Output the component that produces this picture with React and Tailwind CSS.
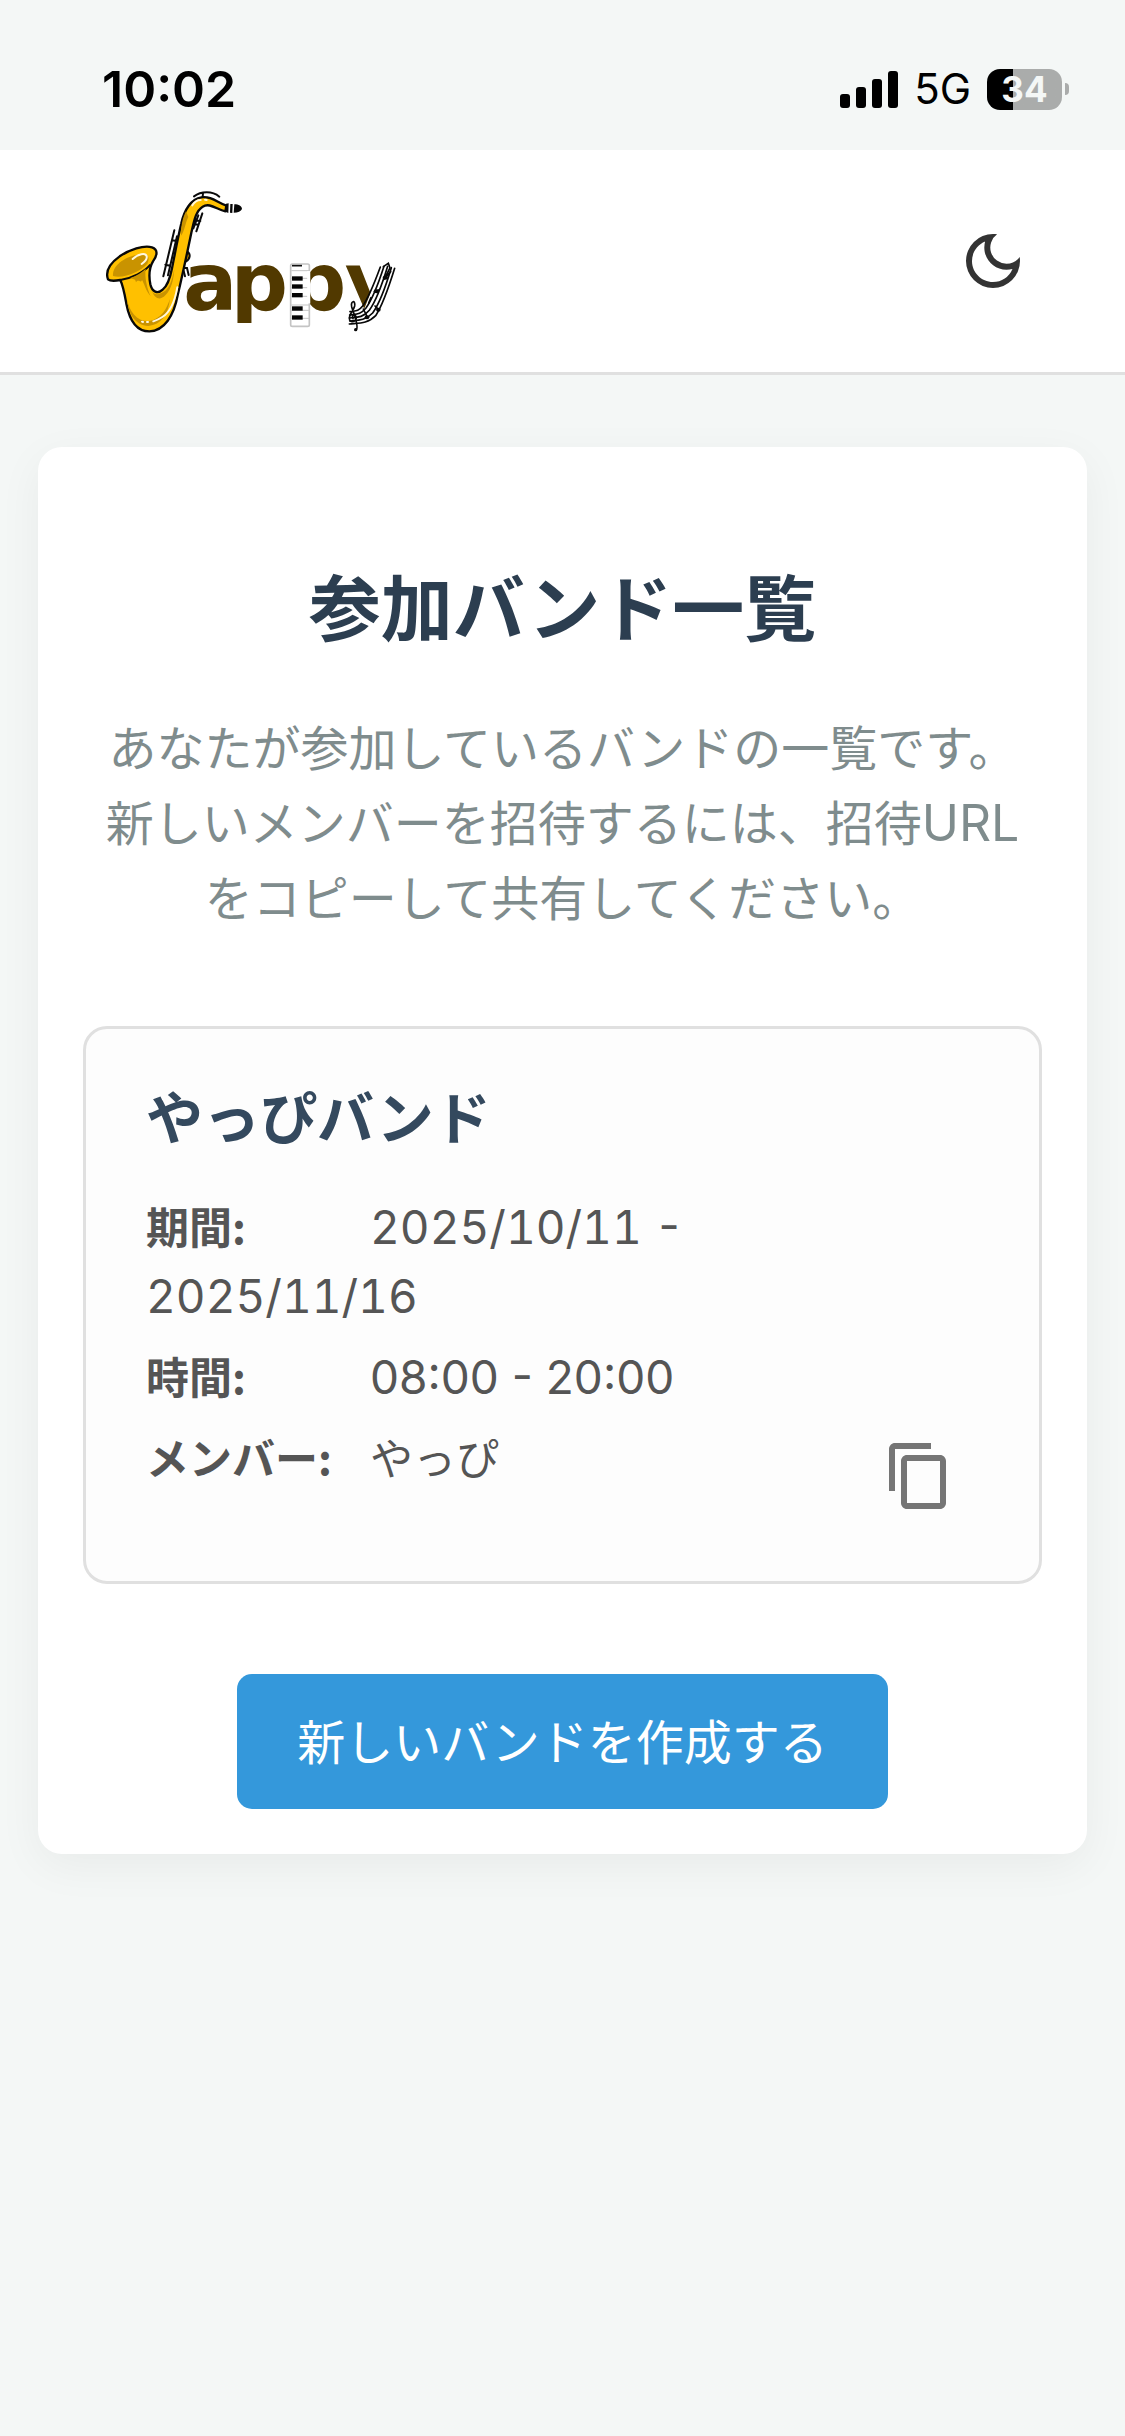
import React from "react";
import { MdContentCopy, MdOutlineDarkMode } from "react-icons/md";

const PIANO_KEYS = [316, 340, 366, 406, 433];

function StatusBar() {
  return (
    <div className="flex h-[150px] items-center justify-between pt-7 pr-14 pl-[102px] text-black">
      <time className="text-[50px] leading-[60px] font-semibold">10:02</time>
      <div className="flex items-center gap-4">
        <svg className="h-[37px] w-[58px]" viewBox="0 0 58 37" aria-hidden="true">
          <rect x="0" y="23" width="10" height="14" rx="3" />
          <rect x="16" y="16" width="10" height="21" rx="3" />
          <rect x="32" y="8" width="10" height="29" rx="3" />
          <rect x="48" y="0" width="10" height="37" rx="3" />
        </svg>
        <span className="text-[42px] leading-[48px]">5G</span>
        <div className="flex items-center gap-[3px]">
          <div className="flex h-[41px] w-[75px] items-center justify-center rounded-[13px] bg-linear-to-r from-black from-35% to-[#aaacab] to-35% text-[35px] leading-none font-bold text-[#f4f7f6]">
            34
          </div>
          <div className="h-3 w-1 rounded-r-full bg-[#aaacab]" />
        </div>
      </div>
    </div>
  );
}

function Logo() {
  return (
    <svg className="h-[180px] w-[340px]" viewBox="0 0 1020 540" role="img" aria-label="Jappy">
      <g fontFamily="DejaVu Sans, sans-serif" fontWeight="700" fontSize="240" fill="#513900">
        <text x="310" y="417">a</text>
        <text x="452" y="417">p</text>
        <text x="627" y="417">p</text>
        <text x="794" y="417">y</text>
      </g>
      <path d="M628 262H690V484H628ZM440 456H627V500H440ZM905 270L960 270L960 500H780L800 440L850 420L868 375Z" fill="#fff" />

      <rect x="632" y="279" width="56" height="187" rx="5" fill="#fff" stroke="#c4c4c4" strokeWidth="5" />
      <path d="M634 299H688M634 322H688M634 350H688M634 376H688M634 402H690M634 418H690M634 442H690" stroke="#c4c4c4" strokeWidth="3" />
      <path d="M686 300V397" stroke="#fff" strokeWidth="9" />
      <path d="M636 284H666" stroke="#111" strokeWidth="5" />
      {PIANO_KEYS.map((y) => (
        <rect key={y} x="636" y={y} width="32" height="13" fill="#050505" />
      ))}

      <g fill="none" stroke="#080808" strokeWidth="5" strokeLinecap="round">
        <path d="M901 288C880 345 866 380 848 405C833 424 825 419 810 422" />
        <path d="M912 286C893 345 877 385 858 411C841 432 828 429 809 432" />
        <path d="M923 286C905 345 889 389 868 418C849 441 830 439 808 441" />
        <path d="M934 290C917 347 900 395 878 426C856 450 831 448 809 450" />
        <path d="M944 292C926 350 909 401 887 434C863 459 835 456 808 459" />
        <path d="M910 287L925 277L930 291L912 325M918 318L932 302M888 360L898 356M885 405L896 416M873 380L866 396M850 414L862 438" />
        <path d="M829 476C838 466 820 425 815 407C811 389 827 386 824 405C820 422 804 430 809 447C815 459 834 448 827 435C820 427 814 438 819 443" />
      </g>
      <g fill="#080808">
        <ellipse cx="916" cy="320" rx="8" ry="6" />
        <ellipse cx="889" cy="361" rx="8" ry="6" />
        <ellipse cx="895" cy="416" rx="7" ry="6" />
        <ellipse cx="861" cy="439" rx="7" ry="6" />
        <circle cx="827" cy="476" r="5" />
      </g>

      <g fill="none" stroke="#0b0b0b" strokeWidth="6" strokeLinecap="round">
        <path d="M283 178L250 316M291 196L264 313M276 207L287 210M256 281L270 284" />
        <path d="M367 127L349 181M355 133L340 172M346 147L361 150M342 158L354 161" />
        <path d="M342 76C363 60 397 59 418 77M369 66L368 78" />
        <path d="M321 241C333 248 331 264 318 271" fill="#d99d00" />
        <path d="M310 291H321L326 312M311 300L315 316" />
      </g>
      <path
        d="M84 325C75 300 91 276 119 256C149 236 190 222 216 229C234 235 233 252 219 271C207 291 206 314 211 340C216 363 233 370 248 356C265 343 271 318 276 292C285 247 294 198 304 157C313 116 334 83 364 79C394 75 411 94 439 104L436 121C410 115 389 94 368 107C347 120 342 151 334 185C321 248 306 318 293 373C282 433 253 480 208 481C165 481 147 440 139 398C134 370 130 346 121 327C105 330 91 331 84 325Z"
        fill="#ffc000"
        stroke="#090909"
        strokeWidth="7"
        strokeLinejoin="round"
      />
      <path d="M99 315C96 285 131 260 168 252C202 245 212 256 202 278C185 299 133 324 99 315Z" fill="#c99300" />
      <path d="M121 327C157 321 193 303 211 281" fill="none" stroke="#090909" strokeWidth="6" />
      <path d="M151 321C170 314 185 304 197 293C193 320 202 353 212 376C197 359 192 335 186 327C181 339 176 322 168 334C166 320 158 327 151 321Z" fill="#c99300" />
      <path d="M318 121C305 146 303 172 303 194C314 181 315 158 325 138ZM283 294C275 332 267 359 242 367C229 373 219 367 216 360C224 383 240 390 256 373C274 356 281 326 283 294ZM141 383C148 423 172 452 207 450C244 443 260 414 270 383C264 432 244 460 205 465C165 461 145 430 141 383Z" fill="#c99300" />
      <g fill="none" stroke="#fff8df" strokeWidth="6" strokeLinecap="round">
        <path d="M158 264C174 249 197 244 200 256C202 264 193 273 185 279" />
        <path d="M337 103C344 91 354 87 362 87M375 86L380 87M292 349C284 393 270 424 247 438C238 444 229 448 220 451M204 453L201 453M189 453L186 452" />
      </g>
      <path d="M438 98L446 97L445 126L436 122ZM451 99L458 99L457 126L450 125ZM463 100C476 100 486 106 486 114C483 121 474 125 461 125Z" fill="#080808" />
    </svg>
  );
}

function Detail({ label, children }) {
  return (
    <div>
      <dt className="mr-2 inline-block min-w-[216px] font-bold">{label}:</dt>
      <dd className="inline">{children}</dd>
    </div>
  );
}

function BandCard() {
  return (
    <article className="flex items-end justify-between rounded-3xl border-3 border-[#e0e0e0] bg-[#fdfdfd] px-[60px] pt-[49px] pb-[45px]">
      <div className="pb-[45px]">
        <h2 className="text-[57px] leading-[72px] font-bold text-[#34495e]">やっぴバンド</h2>
        <dl className="mt-[41px] flex flex-col gap-3 text-[43px] leading-[69px] text-[#555]">
          <Detail label="期間">
            <time className="font-[Inter] text-[46px] leading-none tabular-nums">2025/10/11 -</time>{" "}
            <time className="font-[Inter] text-[46px] leading-none tabular-nums">2025/11/16</time>
          </Detail>
          <Detail label="時間">
            <span className="font-[Inter] text-[46px] leading-none">08:00 - 20:00</span>
          </Detail>
          <Detail label="メンバー">やっぴ</Detail>
        </dl>
      </div>
      <button type="button" aria-label="招待URLをコピー" className="shrink-0 p-6 text-[#757575]">
        <MdContentCopy className="size-[72px]" />
      </button>
    </article>
  );
}

export default function App() {
  return (
    <div className="min-h-screen bg-[#f4f7f6] font-['Inter','Noto_Sans_CJK_JP',sans-serif]">
      <StatusBar />
      <header className="flex h-[225px] items-center justify-between border-b-3 border-[#e0e0e0] bg-white pr-[72px] pl-20">
        <a href="#top" aria-label="Jappy">
          <Logo />
        </a>
        <button type="button" aria-label="ダークモード" className="p-6 text-[#333]">
          <MdOutlineDarkMode className="size-[72px]" />
        </button>
      </header>
      <main className="px-[38px] pt-[72px] font-['Noto_Sans_CJK_JP',sans-serif]" lang="ja">
        <section className="rounded-3xl bg-white px-[45px] pt-[103px] pb-[45px] shadow-[0_12px_45px_rgba(0,0,0,0.05)]">
          <h1 className="text-center text-[72px] leading-[108px] font-bold text-[#2c3e50]">参加バンド一覧</h1>
          <p className="mt-[50px] mb-[93px] px-3 text-center text-[48px] leading-[75px] text-[#7f8c8d]">
            あなたが参加しているバンドの一覧です。新しいメンバーを招待するには、招待<span className="font-[Inter] text-[50px] leading-none">URL</span>をコピーして共有してください。
          </p>
          <BandCard />
          <div className="mt-[90px] flex justify-center">
            <button type="button" className="rounded-[15px] bg-[#3498db] px-[60px] pt-7 pb-8 text-[48px] leading-[75px] text-white">
              新しいバンドを作成する
            </button>
          </div>
        </section>
      </main>
    </div>
  );
}
